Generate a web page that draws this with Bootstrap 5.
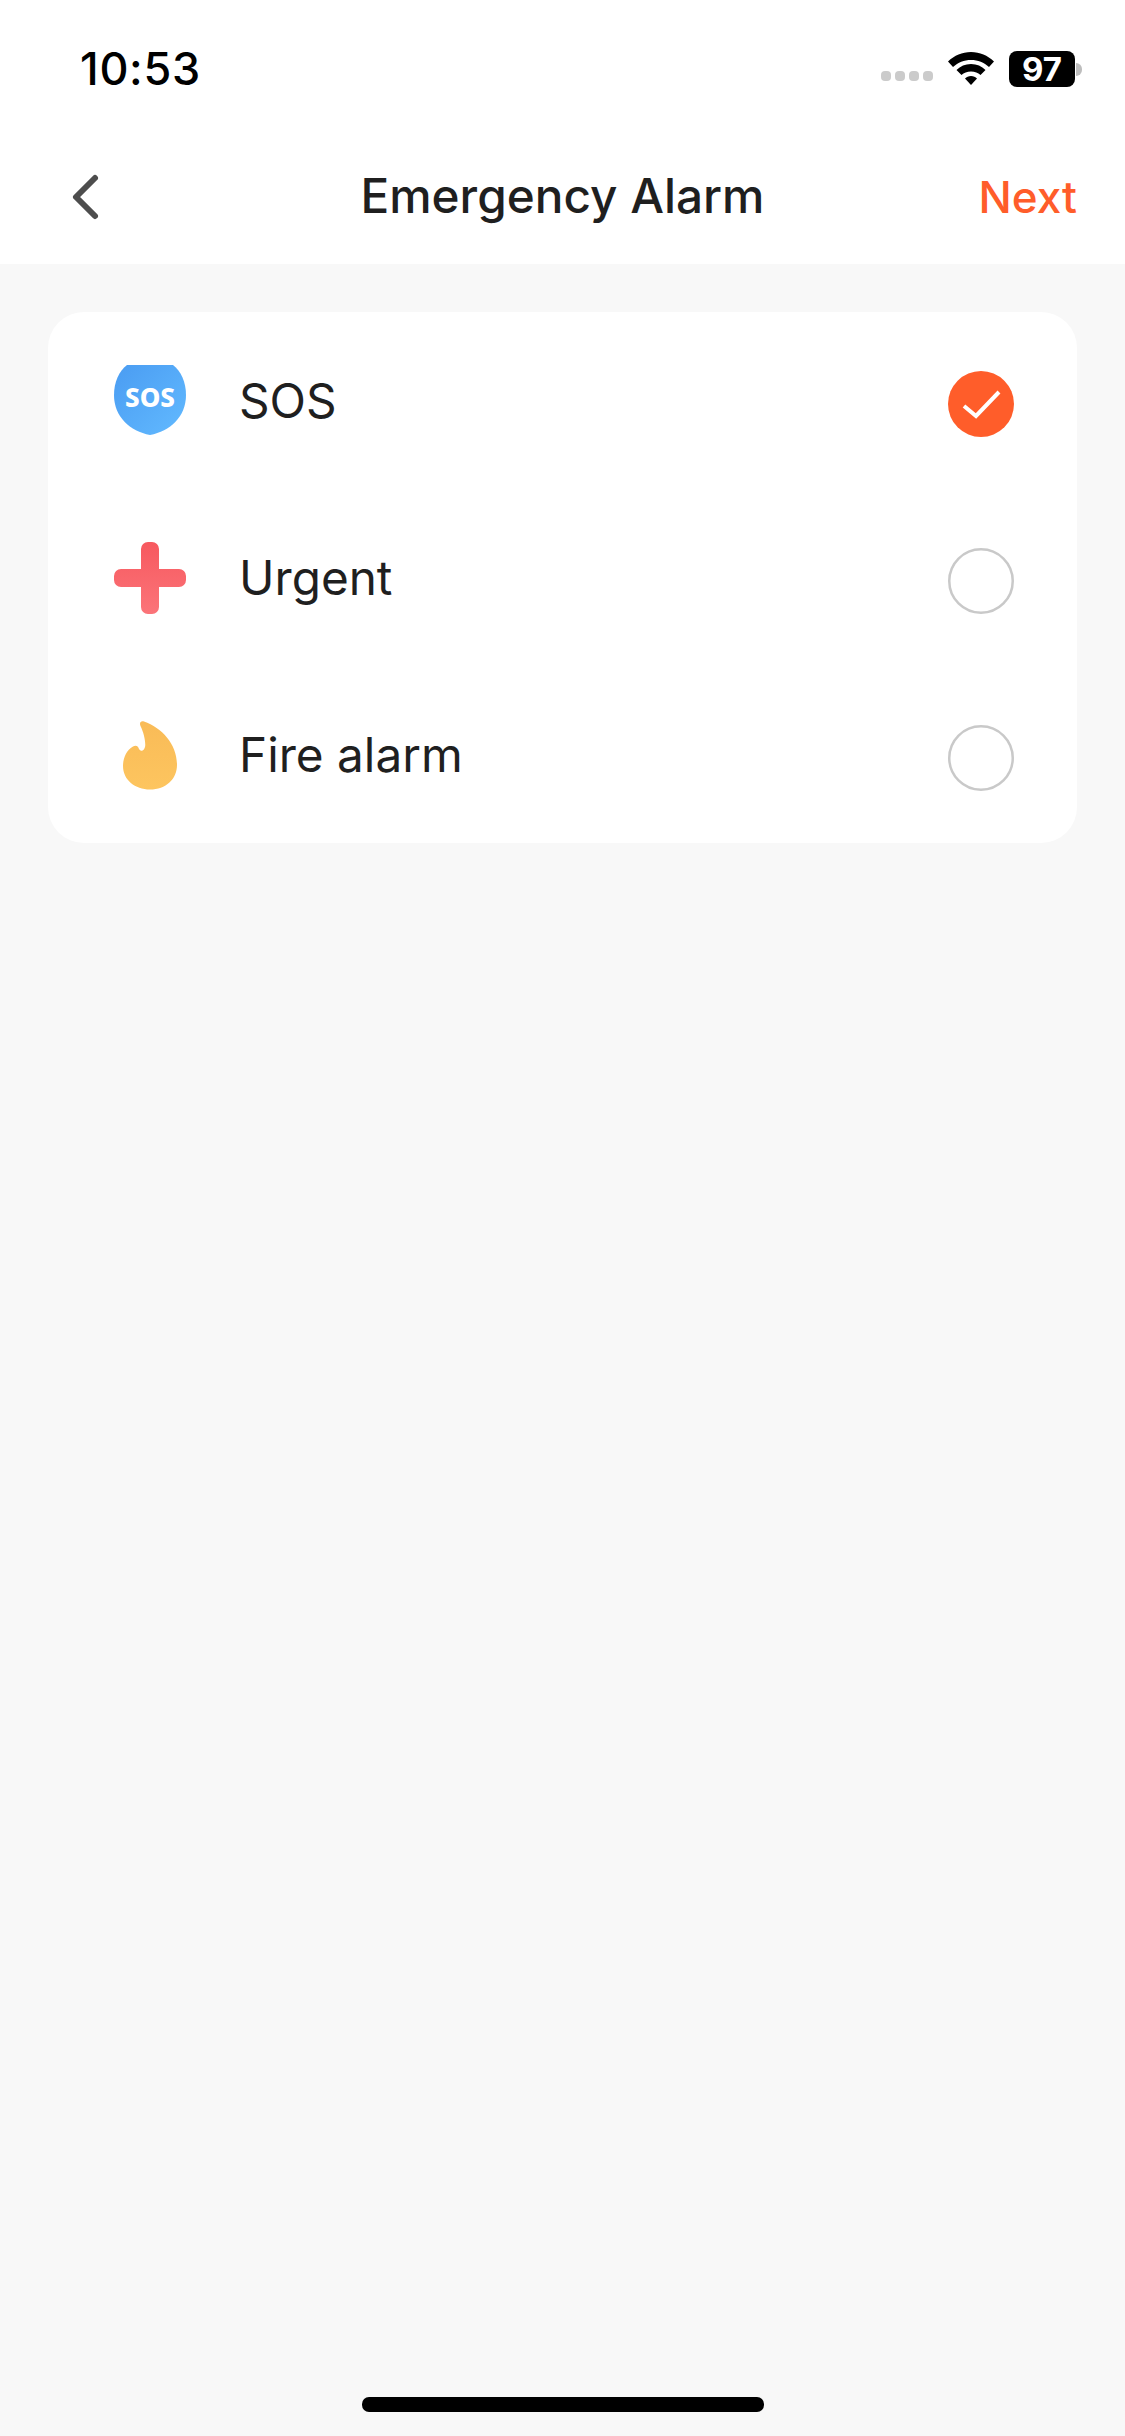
<!DOCTYPE html>
<html lang="en">
<head>
    <meta charset="UTF-8" />
    <title>Emergency Alarm</title>
    <meta name="viewport" content="width=device-width, initial-scale=1" />
    <link href="https://cdn.jsdelivr.net/npm/bootstrap@5.3.3/dist/css/bootstrap.min.css" rel="stylesheet" />
    <style>
        html, body { height: 100%; }
        body { background: #f8f8f8; font-family: Inter, "Liberation Sans", sans-serif; color: #1f1f1f; }
        .phone-page { height: 2436px; }
        .status-row { height: 138px; padding: 0 43px 0 80px; }
        .status-time { font-size: 45px; font-weight: 500; color: #000; line-height: 1; margin-top: -2px; letter-spacing: .7px; }
        .status-dots { gap: 4px; margin-top: 13px; margin-right: 15px; }
        .status-dots span { width: 10px; height: 10px; border-radius: 4px; background: #cbcbcb; }
        .battery-box { width: 66px; height: 36px; background: #000; color: #fff; border-radius: 8px; font-size: 33px; font-weight: 700; line-height: 36px; text-align: center; margin-left: 15px; }
        .battery-tip { width: 6px; height: 13px; background: #bdbdbd; border-radius: 0 6px 6px 0; margin-left: 1px; }
        .title-row { height: 126px; padding: 0 48px 8px 48px; }
        .title-row h1 { font-size: 47.700px; font-weight: 500; margin: 0; line-height: 1; }
        .title-side { width: 120px; }
        .back-icon { margin-left: 23px; display: block; }
        .next-link { font-size: 44px; font-weight: 500; color: #ff5d2a; text-decoration: none; line-height: 1; }
        .alarm-card { margin: 48px 48px 0 48px; background: #fff; border-radius: 36px; overflow: hidden; }
        .alarm-row { height: 177px; padding: 0 63px 0 66px; }
        .alarm-icon { width: 72px; height: 72px; flex: none; }
        .alarm-name { font-size: 47.700px; margin-left: 53px; margin-top: 2px; line-height: 1; }
        .alarm-check { width: 66px; height: 66px; flex: none; margin-top: 7px; }
        .home-bar { width: 402px; height: 15px; background: #000; border-radius: 7px; margin-bottom: 24px; }
    </style>
</head>
<body>
<div class="phone-page d-flex flex-column">
    <div class="bg-white">
        <div class="status-row d-flex align-items-center">
            <div class="status-time">10:53</div>
            <div class="ms-auto d-flex align-items-center">
                <div class="status-dots d-flex"><span></span><span></span><span></span><span></span></div>
                <svg width="46" height="34" viewBox="0 0 46 34">
                    <path d="M23 0C14 0 6.500 3.500 0 9.500L5 15C10 10.500 16 8 23 8S36 10.500 41 15L46 9.500C39.500 3.500 32 0 23 0Z" fill="#000"/>
                    <path d="M23 12C17 12 12.500 14 8.500 18L13.500 23C16 21 19 19.500 23 19.500S30 21 32.500 23L37.500 18C33.500 14 29 12 23 12Z" fill="#000"/>
                    <path d="M23 24C20.500 24 18.500 25 17 26.500L23 33L29 26.500C27.500 25 25.500 24 23 24Z" fill="#000"/>
                </svg>
                <div class="battery-box">97</div>
                <div class="battery-tip"></div>
            </div>
        </div>
        <div class="title-row d-flex align-items-center justify-content-between">
            <div class="title-side">
                <svg class="back-icon" width="30" height="48" viewBox="0 0 30 48">
                    <path d="M24 5L5 24L24 43" fill="none" stroke="#4d4d4d" stroke-width="6" stroke-linecap="round" stroke-linejoin="round"/>
                </svg>
            </div>
            <h1>Emergency Alarm</h1>
            <div class="title-side text-end"><a href="#" class="next-link">Next</a></div>
        </div>
    </div>

    <div class="alarm-card">
        <div class="alarm-row d-flex align-items-center">
            <svg class="alarm-icon" viewBox="0 0 72 72">
                <defs>
                    <linearGradient id="sosFill" x1="0" y1="0" x2="1" y2="1">
                        <stop offset="0" stop-color="#4a9cf2"/>
                        <stop offset="1" stop-color="#62baff"/>
                    </linearGradient>
                    <linearGradient id="plusFill" x1="0" y1="0" x2="0" y2="1">
                        <stop offset="0" stop-color="#f7595f"/>
                        <stop offset="1" stop-color="#fb7479"/>
                    </linearGradient>
                    <linearGradient id="flameFill" x1="0" y1="0" x2="0" y2="1">
                        <stop offset="0" stop-color="#f9bb57"/>
                        <stop offset="1" stop-color="#fdc55f"/>
                    </linearGradient>
                </defs>
                <path d="M13 0H59C67 6 72 17 72 30C72 52 56 66 36 70C16 66 0 52 0 30C0 17 5 6 13 0Z" fill="url(#sosFill)"/>
                <text x="36" y="42" text-anchor="middle" font-family="'Noto Sans', sans-serif" font-size="26" font-weight="800" fill="#fff">SOS</text>
            </svg>
            <div class="alarm-name">SOS</div>
            <svg class="alarm-check ms-auto" viewBox="0 0 66 66">
                <circle cx="33" cy="33" r="33" fill="#ff5d2a"/>
                <path d="M16 35L28 45L51 21" fill="none" stroke="#fff" stroke-width="4"/>
            </svg>
        </div>
        <div class="alarm-row d-flex align-items-center">
            <svg class="alarm-icon" viewBox="0 0 72 72">
                <path d="M34 0H38A7 7 0 0 1 45 7V27H65A7 7 0 0 1 72 34V38A7 7 0 0 1 65 45H45V65A7 7 0 0 1 38 72H34A7 7 0 0 1 27 65V45H7A7 7 0 0 1 0 38V34A7 7 0 0 1 7 27H27V7A7 7 0 0 1 34 0Z" fill="url(#plusFill)"/>
            </svg>
            <div class="alarm-name">Urgent</div>
            <svg class="alarm-check ms-auto" viewBox="0 0 66 66">
                <circle cx="33" cy="33" r="31.750" fill="none" stroke="#c9c9c9" stroke-width="2.500"/>
            </svg>
        </div>
        <div class="alarm-row d-flex align-items-center">
            <svg class="alarm-icon" viewBox="0 0 72 72">
                <path d="M30 2.500C27 1.500 25 3.500 26.500 7C30 14 32 24 31 28C30 32 27 33 25 30C24 27 22 26 19 27.500C12 31 9 40 9 47C9 61 21 70.500 36 70.500C52 70.500 63 60 63 46C63 25 48 9 30 2.500Z" fill="url(#flameFill)"/>
            </svg>
            <div class="alarm-name">Fire alarm</div>
            <svg class="alarm-check ms-auto" viewBox="0 0 66 66">
                <circle cx="33" cy="33" r="31.750" fill="none" stroke="#c9c9c9" stroke-width="2.500"/>
            </svg>
        </div>
    </div>

    <div class="mt-auto d-flex justify-content-center">
        <div class="home-bar"></div>
    </div>
</div>
</body>
</html>
